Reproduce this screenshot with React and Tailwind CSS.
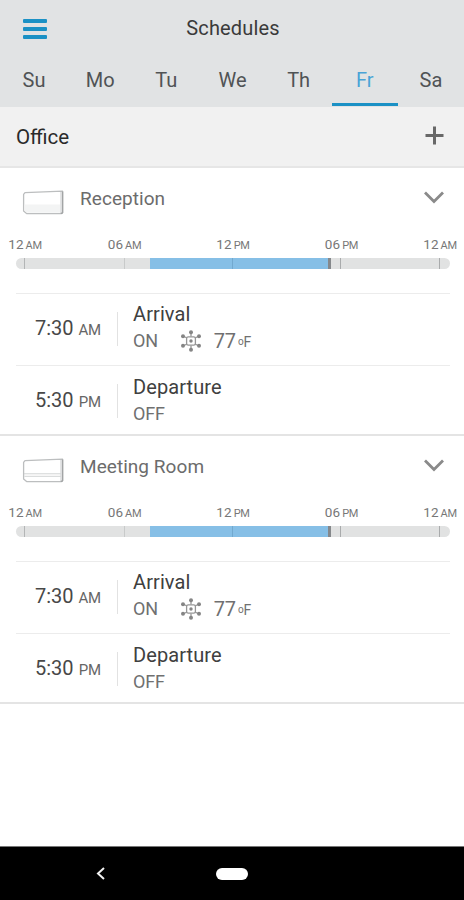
import { useState } from "react";

const days = ["Su", "Mo", "Tu", "We", "Th", "Fr", "Sa"];

const hours = [
  { hour: "12", period: "AM" },
  { hour: "06", period: "AM" },
  { hour: "12", period: "PM" },
  { hour: "06", period: "PM" },
  { hour: "12", period: "AM" },
];

const rooms = [
  { name: "Reception", filled: true },
  { name: "Meeting Room", filled: false },
];

function UnitIcon({ filled }) {
  return (
    <svg width="42" height="26" viewBox="0 0 42 26" fill="none" strokeLinejoin="round">
      <path d="M3 2.6 40.6 1.2v21.6L38.8 23.6H4.6L1.6 21V4.4z" fill="#fff" stroke="#bcbebf" strokeWidth="1.3" />
      {filled ? (
        <path d="M2.5 14.5H38V22.8H5L2.5 20.5z" fill="#f3f4f4" />
      ) : (
        <path d="M2 15.8H38.6M2.4 18.3H38.6" stroke="#cccecf" strokeWidth="0.9" />
      )}
      <path d="M39 2V23.3" stroke="#c3c5c6" strokeWidth="0.9" />
      <path d="M40.6 1.4V22.8L38.8 23.6" stroke="#a2a4a5" strokeWidth="1.3" />
    </svg>
  );
}

function CoolIcon() {
  return (
    <svg width="22" height="22" viewBox="0 0 22 22" fill="none" stroke="#969696" strokeWidth="1.3">
      <path d="M11 6.5V2M11 15.5V20M7 8 3 6M15 8 19 6M7 14 3 16M15 14l4 2" />
      <rect x="6.6" y="6.8" width="8.8" height="8.4" rx="1.6" />
      <g fill="#858585" stroke="none">
        <circle cx="11" cy="11" r="1.7" />
        <circle cx="11" cy="2.2" r="2" />
        <circle cx="11" cy="19.8" r="2" />
        <circle cx="3" cy="6.2" r="2" />
        <circle cx="19" cy="6.2" r="2" />
        <circle cx="3" cy="15.8" r="2" />
        <circle cx="19" cy="15.8" r="2" />
      </g>
    </svg>
  );
}

function Timeline() {
  return (
    <div>
      <div className="grid h-[18px] grid-cols-[50px_149px_68px_149px_48px] text-center whitespace-nowrap text-[#777]">
        {hours.map((h, i) => (
          <div key={i} className="text-[13.5px] leading-[17px] tracking-[0.1px]">
            {h.hour}
            <span className="ml-[2px] text-[11px] tracking-[-0.3px]">{h.period}</span>
          </div>
        ))}
      </div>
      <div className="relative mt-[4px] ml-4 flex h-[11px] w-[434px] overflow-hidden rounded-full bg-[#e1e2e2]">
        <div className="ml-[134px] w-[181px] border-r-[3px] border-[#85888b] bg-[#86bfe6]" />
        <span className="absolute left-[8px] h-full w-px bg-[#b3b5b6]" />
        <span className="absolute left-[108px] h-full w-px bg-[#c8caca]" />
        <span className="absolute left-[216px] h-full w-px bg-[#72a9cf]" />
        <span className="absolute left-[324px] h-full w-px bg-[#a9abac]" />
        <span className="absolute left-[423px] h-full w-px bg-[#a9abac]" />
      </div>
    </div>
  );
}

function Event({ time, period, title, height, textTop, children }) {
  return (
    <div className={`ml-4 mr-[14px] flex border-t border-[#ececec] ${height}`}>
      <div className="flex w-[101px] items-baseline justify-between pt-[22px] pl-[19px] pr-4 text-[20px] leading-6 text-[#484848]">
        {time}
        <span className="text-[15px] tracking-[-0.2px] text-[#666]">{period}</span>
      </div>
      <div className="mt-[18px] h-[34px] w-px bg-[#e2e2e2]" />
      <div className={`pl-[15px] ${textTop}`}>
        <div className="text-[20px] leading-6 tracking-[0.1px] text-[#404040]">{title}</div>
        <div className="mt-[3px] flex h-6 items-center text-[18px] leading-6 tracking-[-0.2px] text-[#707070]">{children}</div>
      </div>
    </div>
  );
}

function Room({ room }) {
  const [open, setOpen] = useState(true);

  return (
    <section className="h-[268px] border-b-2 border-[#e4e4e4]">
      <div className="flex h-[68px] items-start pt-[19px] pl-[22px] pr-[20px]">
        <div className="mt-[3px]">
          <UnitIcon filled={room.filled} />
        </div>
        <h2 className="ml-[16px] text-[19px] leading-6 tracking-[0.05px] text-[#6c6c6c]">{room.name}</h2>
        <button className="ml-auto mt-[4px]" onClick={() => setOpen(!open)}>
          <svg width="20" height="14" viewBox="0 0 20 14" fill="none" stroke="#8a8a8a" strokeWidth="2.8">
            <path d="M1 1.5l9 9 9-9" />
          </svg>
        </button>
      </div>
      <Timeline />
      {open && (
        <div className="mt-6">
          <Event time="7:30" period="AM" title="Arrival" height="h-[72px]" textTop="pt-[8px]">
            <span>ON</span>
            <span className="ml-[22px]">
              <CoolIcon />
            </span>
            <span className="ml-[12px] text-[20px]">77</span>
            <span className="ml-[2px] mt-[3px] text-[14px]">
              <span className="relative -top-[2px] text-[10px]">o</span>F
            </span>
          </Event>
          <Event time="5:30" period="PM" title="Departure" height="h-[69px]" textTop="pt-[9px]">
            OFF
          </Event>
        </div>
      )}
    </section>
  );
}

export default function SchedulesApp() {
  const [day, setDay] = useState("Fr");

  return (
    <div className="flex h-[900px] w-[464px] flex-col overflow-hidden bg-white font-['Roboto',sans-serif]">
      <header className="h-[107px] bg-[#e1e3e4]">
        <div className="grid h-[57px] grid-cols-[70px_1fr_70px] items-center">
          <button className="ml-[23px] flex w-6 flex-col gap-1">
            <span className="h-[4px] w-6 rounded-[1px] bg-[#1b91c5]" />
            <span className="h-[4px] w-6 rounded-[1px] bg-[#1b91c5]" />
            <span className="h-[4px] w-6 rounded-[1px] bg-[#1b91c5]" />
          </button>
          <h1 className="-mt-px pl-[2px] text-center text-[20px] tracking-[0.15px] text-[#3a3a3a]">Schedules</h1>
        </div>
        <nav className="ml-px grid h-[49px] grid-cols-7">
          {days.map((d) => (
            <button
              key={d}
              onClick={() => setDay(d)}
              className={
                d === day
                  ? "border-b-[3px] border-[#1b91c5] text-[20px] text-[#4aa3d6]"
                  : "border-b-[3px] border-transparent text-[20px] text-[#505355]"
              }
            >
              {d}
            </button>
          ))}
        </nav>
      </header>
      <div className="flex h-[61px] items-center justify-between border-b-2 border-[#e6e6e6] bg-[#f1f1f1] pl-4 pr-[20px]">
        <span className="mt-[2px] text-[20.5px] text-[#2a2a2a]">Office</span>
        <svg className="-mt-[2px]" width="19" height="19" viewBox="0 0 19 19" stroke="#686868" strokeWidth="3">
          <path d="M9.5 .5v18M.5 9.5h18" />
        </svg>
      </div>
      {rooms.map((room) => (
        <Room key={room.name} room={room} />
      ))}
      <footer className="mt-auto grid h-[54px] grid-cols-[202px_60px_1fr] items-center border-t border-[#777] bg-black">
        <svg className="ml-[96px]" width="9" height="13" viewBox="0 0 9 13" fill="none" stroke="#f2f2f2" strokeWidth="2">
          <path d="M8 1 2 6.5 8 12" />
        </svg>
        <div className="mx-auto h-[12px] w-8 rounded-full bg-white" />
      </footer>
    </div>
  );
}
